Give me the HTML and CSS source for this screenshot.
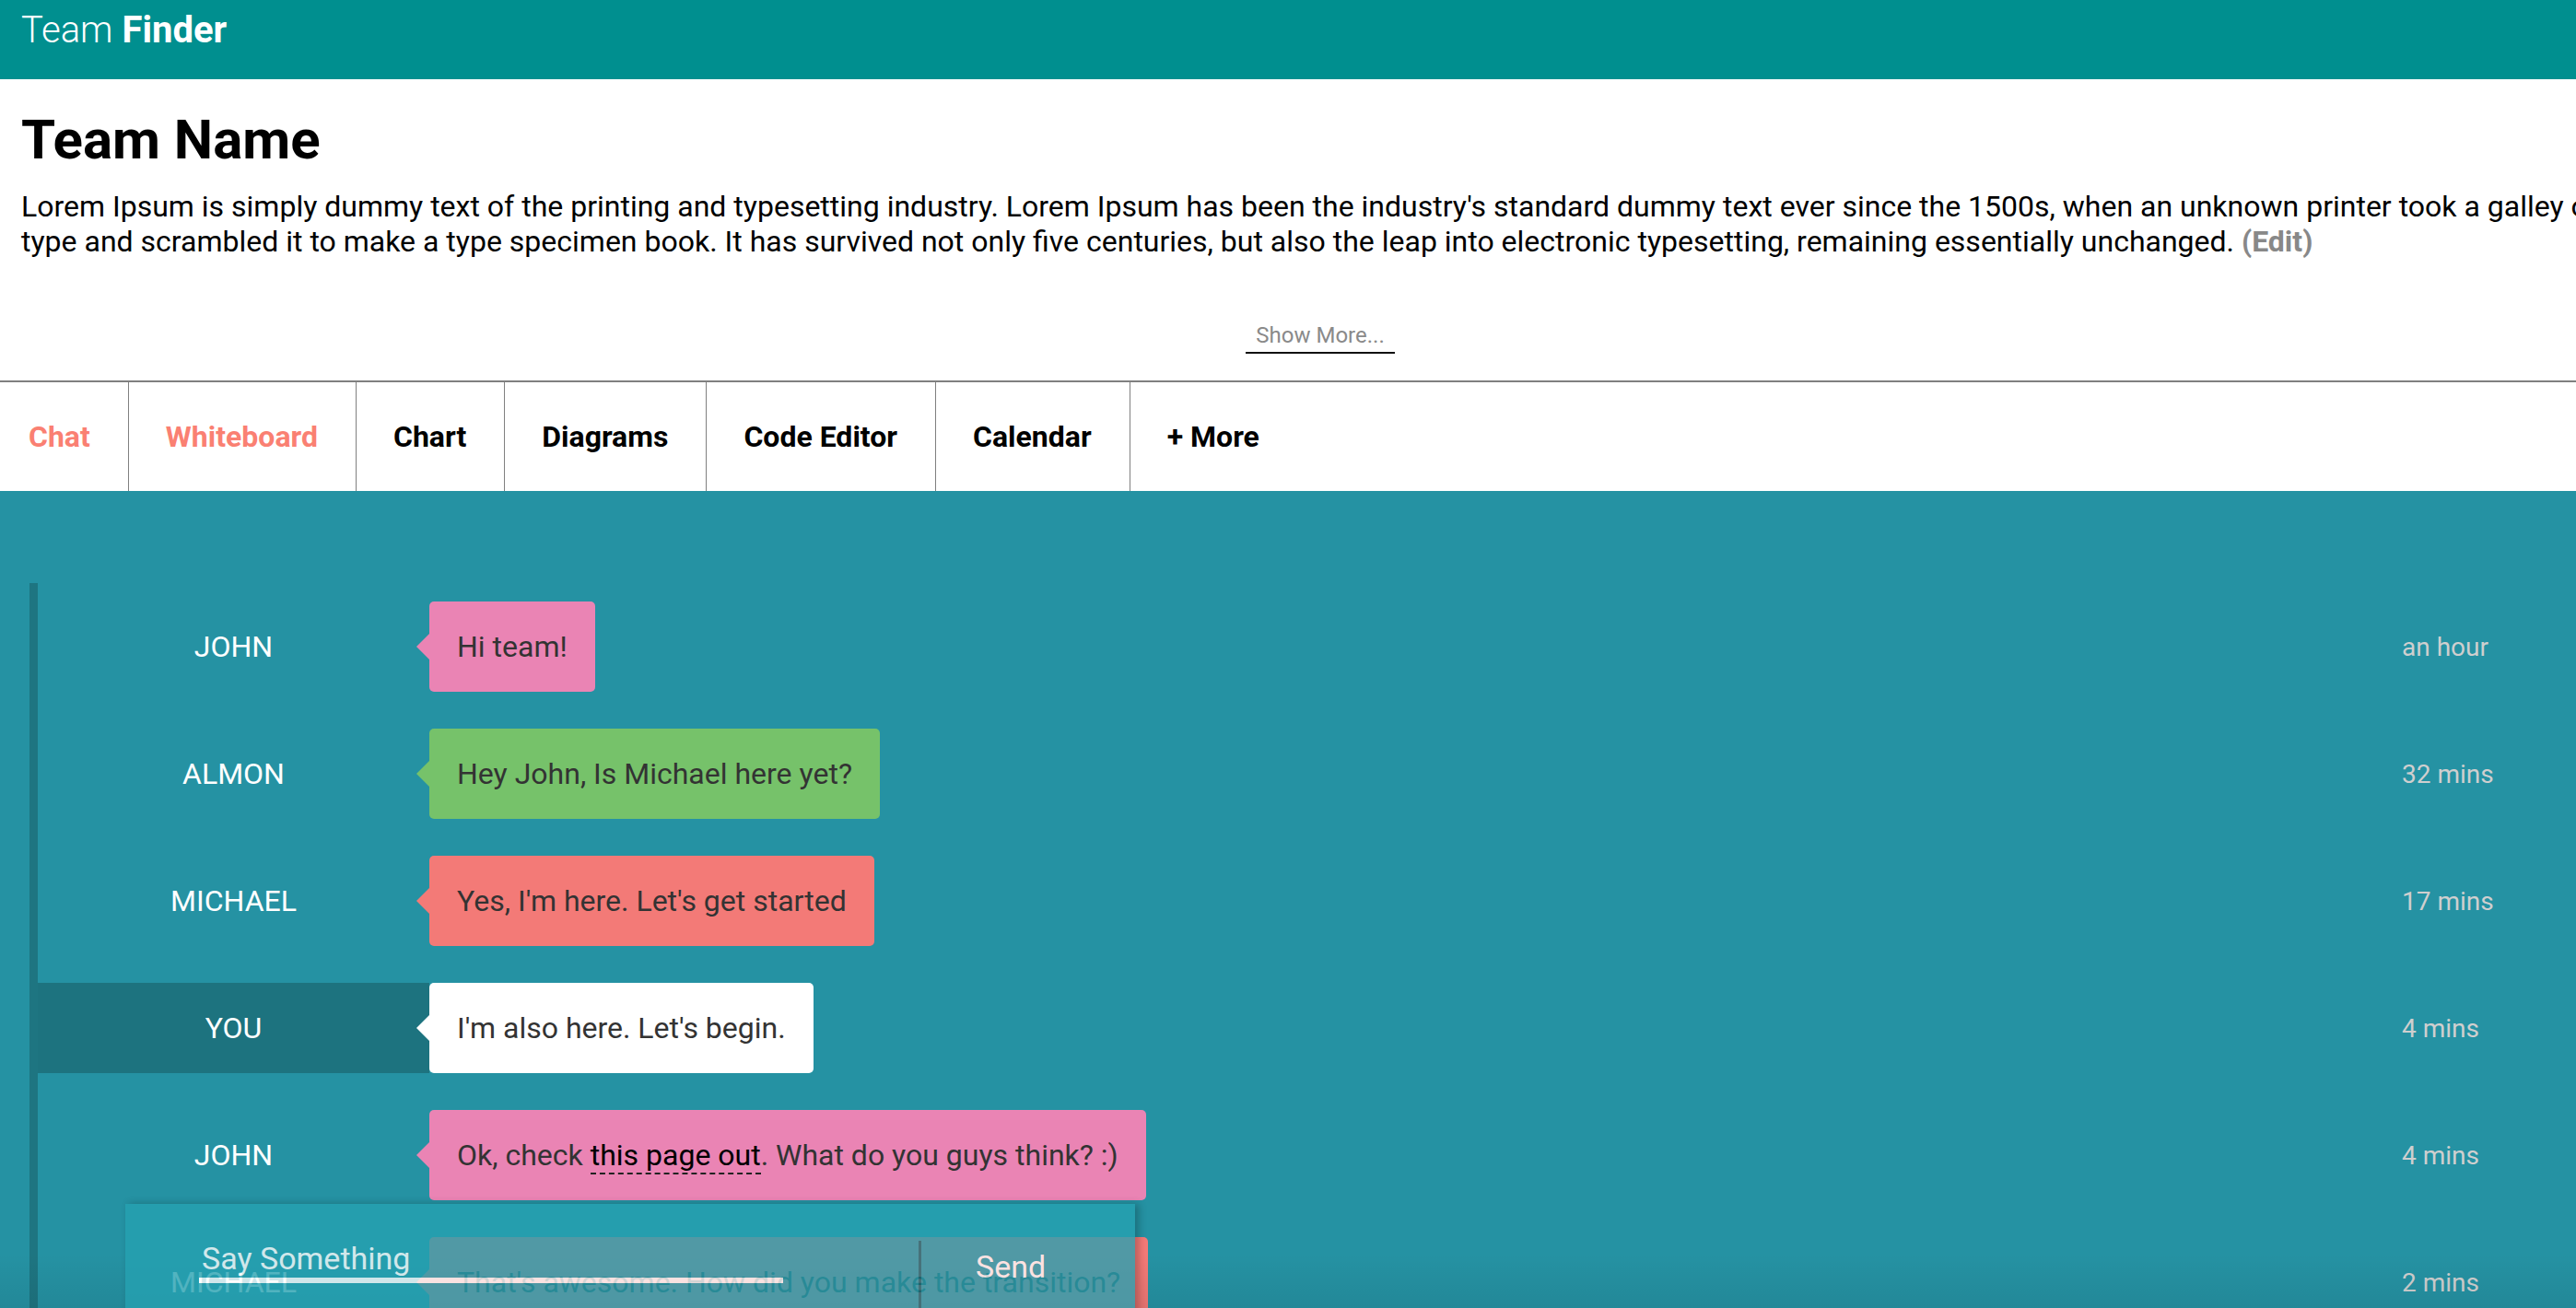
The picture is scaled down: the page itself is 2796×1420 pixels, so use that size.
FILE: index.html
```html
<!DOCTYPE html>
<html lang="en">
<head>
<meta charset="utf-8">
<title>Team Finder</title>
<link rel="stylesheet" href="styles.css">
</head>
<body>
<div class="page">
  <header class="topbar">
    <span class="brand-light">Team</span> <span class="brand-bold">Finder</span>
  </header>

  <section class="team">
    <h1 class="team-name">Team Name</h1>
    <p class="desc">Lorem Ipsum is simply dummy text of the printing and typesetting industry. Lorem Ipsum has been the industry's standard dummy text ever since the 1500s, when an unknown printer took a galley of type and scrambled it to make a type specimen book. It has survived not only five centuries, but also the leap into electronic typesetting, remaining essentially unchanged. <a class="edit">(Edit)</a></p>
    <div class="more-wrap"><button class="more">Show More...</button></div>
  </section>

  <nav class="tabs">
    <a class="tab first active">Chat</a>
    <a class="tab active">Whiteboard</a>
    <a class="tab">Chart</a>
    <a class="tab">Diagrams</a>
    <a class="tab">Code Editor</a>
    <a class="tab">Calendar</a>
    <a class="tab last">+ More</a>
  </nav>

  <section class="chat">
    <div class="thread">
      <div class="msg">
        <div class="name">JOHN</div>
        <div class="bubble pink">Hi team!</div>
        <div class="spacer"></div>
        <div class="time">an hour</div>
      </div>
      <div class="msg">
        <div class="name">ALMON</div>
        <div class="bubble green">Hey John, Is Michael here yet?</div>
        <div class="spacer"></div>
        <div class="time">32 mins</div>
      </div>
      <div class="msg">
        <div class="name">MICHAEL</div>
        <div class="bubble red">Yes, I'm here. Let's get started</div>
        <div class="spacer"></div>
        <div class="time">17 mins</div>
      </div>
      <div class="msg mine">
        <div class="name">YOU</div>
        <div class="bubble white">I'm also here. Let's begin.</div>
        <div class="spacer"></div>
        <div class="time">4 mins</div>
      </div>
      <div class="msg">
        <div class="name">JOHN</div>
        <div class="bubble pink">Ok, check <a class="link">this page out</a>. What do you guys think? :)</div>
        <div class="spacer"></div>
        <div class="time">4 mins</div>
      </div>
      <div class="msg">
        <div class="name">MICHAEL</div>
        <div class="bubble red">That's awesome. How did you make the transition?</div>
        <div class="spacer"></div>
        <div class="time">2 mins</div>
      </div>
    </div>

    <div class="composer">
      <input class="say" type="text" placeholder="Say Something">
      <button class="send">Send</button>
    </div>
  </section>
</div>
</body>
</html>
```

FILE: styles.css
```css
html, body {
  margin: 0;
  padding: 0;
}

body {
  font-family: Roboto, "Liberation Sans", sans-serif;
  overflow: hidden;
  height: 1420px;
  background: #ffffff;
  color: #000;
}

.page {
  width: 2866px;
}

/* ---------- top bar ---------- */
.topbar {
  background: #008f8f;
  color: #ffffff;
  height: 86px;
  box-sizing: border-box;
  padding: 9px 23px 0;
  font-size: 40px;
  line-height: normal;
}

.brand-light {
  font-weight: 300;
}

.brand-bold {
  font-weight: 700;
}

/* ---------- team info ---------- */
.team {
  padding: 0 23px;
}

.team-name {
  margin: 30px 0 0;
  font-size: 60px;
  font-weight: 700;
  line-height: normal;
}

.desc {
  margin: 18px 0 0;
  font-size: 32px;
  line-height: normal;
}

.edit {
  color: #888888;
  font-weight: 700;
}

.more-wrap {
  text-align: center;
  padding-top: 69px;
  padding-bottom: 29px;
}

.more {
  font-family: Roboto, "Liberation Sans", sans-serif;
  font-size: 24px;
  line-height: normal;
  color: #8a8a8a;
  background: transparent;
  border: none;
  border-bottom: 2px solid #111;
  padding: 0 11px 4px;
  margin: 0;
}

/* ---------- tabs ---------- */
.tabs {
  display: flex;
  border-top: 2px solid #808080;
  height: 118px;
  background: #ffffff;
}

.tab {
  display: flex;
  align-items: center;
  padding: 0 41px 0 40px;
  border-right: 1px solid #808080;
  font-size: 32px;
  font-weight: 700;
  color: #000;
}

.tab.first {
  padding-left: 31px;
}

.tab.last {
  border-right: none;
}

.tab.active {
  color: #fa8072;
}

/* ---------- chat ---------- */
.chat {
  position: relative;
  background: #2592a3;
  height: 888px;
  overflow: hidden;
  padding-top: 100px;
  box-sizing: border-box;
}

.chat::after {
  content: "";
  position: absolute;
  left: 0;
  right: 0;
  bottom: 0;
  height: 60px;
  background: linear-gradient(rgba(0, 0, 0, 0), rgba(0, 0, 0, 0.07));
  pointer-events: none;
}

.thread {
  margin-left: 32px;
  border-left: 9px solid #1e7581;
  padding-top: 20px;
  display: flex;
  flex-direction: column;
  gap: 40px;
}

.msg {
  display: grid;
  grid-template-columns: 425px max-content 1fr 259px;
  align-items: center;
}

.name {
  align-self: stretch;
  display: flex;
  align-items: center;
  justify-content: center;
  color: #ffffff;
  font-size: 32px;
}

.msg.mine .name {
  background: #1d737f;
}

.bubble {
  --bg: #ea84b4;
  position: relative;
  background: var(--bg);
  color: #333333;
  font-size: 32px;
  line-height: normal;
  padding: 30px;
  border-radius: 5px;
}

.bubble::before {
  content: "";
  position: absolute;
  left: -14px;
  top: 50%;
  margin-top: -14px;
  border-style: solid;
  border-width: 14px 14px 14px 0;
  border-color: transparent var(--bg) transparent transparent;
}

.bubble.pink { --bg: #ea84b4; }
.bubble.green { --bg: #76c26a; }
.bubble.red { --bg: #f37a77; }
.bubble.white { --bg: #ffffff; }

.link {
  color: #000;
  border-bottom: 2px dashed #222;
}

.time {
  color: #cfcfcf;
  font-size: 28px;
}

/* ---------- composer overlay ---------- */
.composer {
  position: absolute;
  left: 136px;
  top: 774px;
  width: 1096px;
  height: 200px;
  box-sizing: border-box;
  padding: 38px 0 0 80px;
  background: #26a2b2;
  opacity: 0.79;
  box-shadow: 4px 0 8px rgba(0, 0, 0, 0.3);
  display: flex;
  align-items: flex-start;
  z-index: 2;
}

.say {
  width: 634px;
  box-sizing: border-box;
  margin: 0;
  padding: 0 3px;
  border: none;
  border-bottom: 6px solid #ffffff;
  background: transparent;
  color: #ffffff;
  font-family: Roboto, "Liberation Sans", sans-serif;
  font-size: 34px;
  line-height: normal;
  height: 48px;
  outline: none;
}

.say::placeholder {
  color: #ffffff;
  opacity: 1;
}

.send {
  margin: 2px 0 0 147px;
  height: 200px;
  border: none;
  border-left: 3px solid rgba(0, 0, 0, 0.3);
  background: transparent;
  color: #ffffff;
  font-family: Roboto, "Liberation Sans", sans-serif;
  font-size: 34px;
  line-height: normal;
  padding: 8px 40px 0 59px;
  text-align: left;
  align-self: flex-start;
  display: flex;
  align-items: flex-start;
}
```
